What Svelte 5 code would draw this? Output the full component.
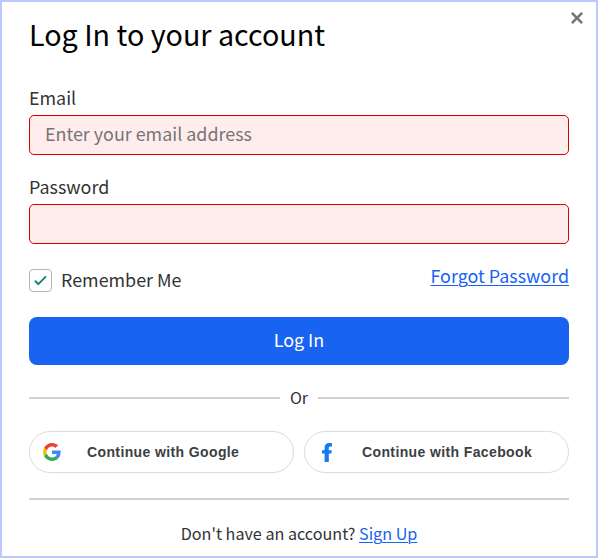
<script lang="ts">
  let email = $state("");
  let password = $state("");
  let remember = $state(true);
</script>

<main class="modal">
  <button class="close" type="button" aria-label="Close">
    <svg width="12" height="12" viewBox="0 0 12 12" aria-hidden="true">
      <path d="M.9.9l10.2 10.2M11.1.9L.9 11.1" />
    </svg>
  </button>

  <h1>Log In to your account</h1>

  <form onsubmit={(e) => e.preventDefault()}>
    <div class="field">
      <label for="email">Email</label>
      <input id="email" type="email" placeholder="Enter your email address" bind:value={email} />
    </div>

    <div class="field">
      <label for="password">Password</label>
      <input id="password" type="password" bind:value={password} />
    </div>

    <div class="options">
      <label class="remember">
        <input class="sr-only" type="checkbox" bind:checked={remember} />
        <span class="box">
          {#if remember}
            <svg width="13" height="11" viewBox="0 0 13 11" aria-hidden="true">
              <path d="M1 5.7l3.3 3.4L12 1.4" />
            </svg>
          {/if}
        </span>
        <span class="text">Remember Me</span>
      </label>
      <a class="forgot" href="#forgot">Forgot Password</a>
    </div>

    <button class="submit" type="submit">Log In</button>
  </form>

  <div class="divider"><span>Or</span></div>

  <div class="social">
    <button type="button">
      <svg class="google" width="18" height="18" viewBox="0 0 48 48" aria-hidden="true">
        <path fill="#EA4335" d="M24 9.5c3.54 0 6.71 1.22 9.21 3.6l6.85-6.85C35.9 2.38 30.47 0 24 0 14.62 0 6.51 5.38 2.56 13.22l7.98 6.19C12.43 13.72 17.74 9.5 24 9.5z" />
        <path fill="#4285F4" d="M46.98 24.55c0-1.57-.15-3.09-.38-4.55H24v9.02h12.94c-.58 2.96-2.26 5.48-4.78 7.18l7.73 6c4.51-4.18 7.09-10.36 7.09-17.65z" />
        <path fill="#FBBC05" d="M10.53 28.59c-.48-1.45-.76-2.99-.76-4.59s.27-3.14.76-4.59l-7.98-6.19C.92 16.46 0 20.12 0 24c0 3.88.92 7.54 2.56 10.78l7.97-6.19z" />
        <path fill="#34A853" d="M24 48c6.48 0 11.93-2.13 15.89-5.81l-7.73-6c-2.15 1.45-4.92 2.3-8.16 2.3-6.26 0-11.57-4.22-13.47-9.91l-7.98 6.19C6.51 42.62 14.62 48 24 48z" />
      </svg>
      <span>Continue with Google</span>
    </button>
    <button type="button">
      <svg class="facebook" width="10" height="19" viewBox="0 0 10 19" aria-hidden="true">
        <path fill="#1877f2" d="M2.6 19v-8.4H0V7.2h2.6V5C2.6 1.8 4.3 0 7.3 0c1.1 0 2.2.2 2.7.3v3.1H8.6c-1.4 0-1.8.8-1.8 1.7v2.1h3L9.3 10.6H6.8V19z" />
      </svg>
      <span>Continue with Facebook</span>
    </button>
  </div>

  <p class="signup">Don't have an account? <a href="#signup">Sign Up</a></p>
</main>

<style>
  :global(body) {
    margin: 0;
  }

  .modal {
    position: relative;
    box-sizing: border-box;
    width: 598px;
    height: 558px;
    padding: 12px 27px 0;
    border: 2px solid #bcc8ff;
    background: #fff;
    color: #333;
    font-family: "Noto Sans CJK SC", "Noto Sans", sans-serif;
    font-size: 17.9px;
    line-height: 24px;
  }

  button,
  input {
    box-sizing: border-box;
    font-family: inherit;
  }

  a {
    color: #1863f1;
    text-decoration: underline;
    text-decoration-thickness: 1px;
    text-underline-offset: 2px;
  }

  .close {
    position: absolute;
    top: 10px;
    right: 13px;
    display: flex;
    padding: 0;
    border: 0;
    background: none;
  }

  .close svg {
    fill: none;
    stroke: #757575;
    stroke-width: 2.6;
  }

  h1 {
    margin: 0 0 32px;
    color: #000;
    font-size: 28.7px;
    font-weight: 400;
    line-height: 40px;
  }

  .field {
    margin-bottom: 20px;
  }

  .field label {
    display: block;
    height: 29px;
    line-height: 22px;
  }

  .field input {
    display: block;
    width: 100%;
    height: 40px;
    padding: 0 15px 4px;
    border: 1px solid #d60000;
    border-radius: 5px;
    background: #ffeded;
    color: #333;
    font-size: 17.9px;
    outline: none;
  }

  .field input::placeholder {
    color: #757575;
    opacity: 1;
  }

  .options {
    display: flex;
    justify-content: space-between;
    height: 53px;
  }

  .remember {
    display: flex;
    align-items: center;
    gap: 9px;
    height: 23px;
    margin-top: 5px;
  }

  .remember .text {
    padding-bottom: 3px;
  }

  .forgot {
    line-height: 22px;
  }

  .sr-only {
    position: absolute;
    width: 1px;
    height: 1px;
    margin: 0;
    opacity: 0;
  }

  .box {
    display: flex;
    align-items: center;
    justify-content: center;
    box-sizing: border-box;
    width: 23px;
    height: 23px;
    border: 1px solid #b5b5b5;
    border-radius: 4px;
  }

  .box svg {
    fill: none;
    stroke: #128577;
    stroke-width: 2;
  }

  .submit {
    display: block;
    width: 100%;
    height: 48px;
    padding: 0 0 4px;
    border: 0;
    border-radius: 8px;
    background: #1863f1;
    color: #fff;
    font-size: 17.9px;
    font-weight: 400;
  }

  .divider {
    display: flex;
    align-items: center;
    gap: 10px;
    height: 24px;
    margin-top: 21px;
    font-size: 16.1px;
  }

  .divider span {
    padding-bottom: 2px;
  }

  .divider::before,
  .divider::after {
    content: "";
    flex: 1;
    height: 2px;
    background: #d2d2d2;
  }

  .social {
    display: flex;
    gap: 10px;
    margin-top: 21px;
    padding-bottom: 25px;
    border-bottom: 2px solid #d2d2d2;
  }

  .social button {
    display: flex;
    flex: 1;
    align-items: center;
    gap: 26px;
    height: 42px;
    padding: 0 13px;
    border: 1px solid #dadce0;
    border-radius: 21px;
    background: #fff;
    color: #3c4043;
    font-family: "Liberation Sans", Arial, sans-serif;
    font-size: 14px;
    font-weight: 700;
    letter-spacing: 0.38px;
    white-space: nowrap;
  }

  .facebook {
    margin: 0 4px;
  }

  .signup {
    margin: 21px 0 0;
    font-size: 16.15px;
    text-align: center;
  }
</style>
